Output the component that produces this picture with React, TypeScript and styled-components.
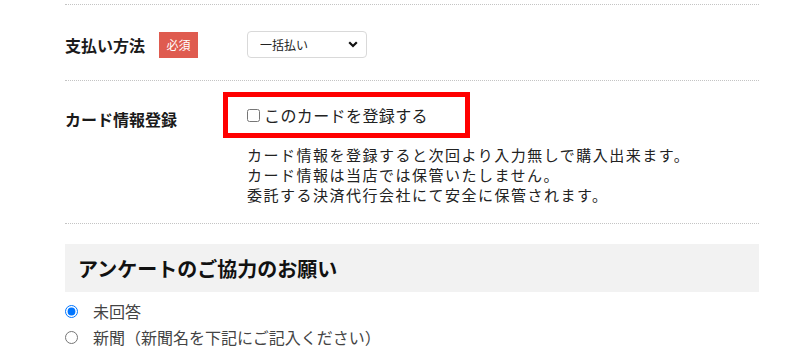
import styled, { createGlobalStyle } from 'styled-components'

const GlobalStyle = createGlobalStyle`
  body {
    margin: 0;
    background: #fff;
    font-family: "Noto Sans CJK JP", "Noto Sans", sans-serif;
    color: #222;
  }
`

export default function App() {
  return (
    <Page>
      <GlobalStyle />
      <Form>
        <Row $pad="26px 0 22px">
          <Label>
            支払い方法
            <Required>必須</Required>
          </Label>
          <Value>
            <SelectWrap>
              <Select defaultValue="1">
                <option value="1">一括払い</option>
              </Select>
              <Chevron width="10" height="7" viewBox="0 0 10 7">
                <path d="M1.2 1.2 L5 5 L8.8 1.2" fill="none" stroke="#111" strokeWidth="2.2" />
              </Chevron>
            </SelectWrap>
          </Value>
        </Row>

        <Row $pad="11px 0 18px" $top>
          <Label $top>カード情報登録</Label>
          <Value>
            <Highlight>
              <Check>
                <input type="checkbox" />
                このカードを登録する
              </Check>
            </Highlight>
            <Note>
              <span>カード情報を登録すると次回より入力無しで購入出来ます。</span>
              <span>カード情報は当店では保管いたしません。</span>
              <span>委託する決済代行会社にて安全に保管されます。</span>
            </Note>
          </Value>
        </Row>

        <Heading>アンケートのご協力のお願い</Heading>
        <Radios>
          <Radio>
            <input type="radio" name="q" defaultChecked />
            未回答
          </Radio>
          <Radio>
            <input type="radio" name="q" />
            新聞（新聞名を下記にご記入ください）
          </Radio>
        </Radios>
      </Form>
    </Page>
  )
}

const Page = styled.div`
  padding: 4px 0 0 65px;
`

const Form = styled.div`
  width: 694px;
  border-top: 1px dotted #c4c4c4;
`

const Row = styled.div<{ $pad: string; $top?: boolean }>`
  display: grid;
  grid-template-columns: 182px 1fr;
  align-items: ${p => (p.$top ? 'start' : 'center')};
  padding: ${p => p.$pad};
  border-bottom: 1px dotted #c4c4c4;
`

const Label = styled.div<{ $top?: boolean }>`
  display: flex;
  align-items: center;
  gap: 14px;
  font-size: 16px;
  font-weight: bold;
  color: #1a1a1a;
  padding-top: ${p => (p.$top ? '15px' : '0')};
`

const Required = styled.span`
  display: inline-flex;
  align-items: center;
  justify-content: center;
  width: 39px;
  height: 26px;
  background: #df5b4f;
  color: #fff;
  font-size: 12px;
  font-weight: normal;
`

const Value = styled.div`
  display: flex;
  flex-direction: column;
  align-items: flex-start;
`

const SelectWrap = styled.div`
  position: relative;
  width: 120px;
  height: 27px;
`

const Select = styled.select`
  appearance: none;
  width: 100%;
  height: 100%;
  box-sizing: border-box;
  border: 1px solid #d9d9d9;
  border-radius: 4px;
  background: #fff;
  padding: 0 0 0 12px;
  font-family: inherit;
  font-size: 12px;
  color: #222;
`

const Chevron = styled.svg`
  position: absolute;
  right: 9px;
  top: 10px;
  pointer-events: none;
`

const Highlight = styled.div`
  margin-left: -24px;
  width: 247px;
  height: 46px;
  box-sizing: border-box;
  border: 5px solid #ff0000;
  display: flex;
  align-items: center;
  padding-left: 19px;
`

const Check = styled.label`
  display: flex;
  align-items: center;
  gap: 4px;
  font-size: 16px;
  letter-spacing: 0.4px;
  color: #222;

  input {
    margin: 0;
    width: 13px;
    height: 13px;
  }
`

const Note = styled.div`
  display: flex;
  flex-direction: column;
  margin-top: 7px;
  font-size: 15px;
  letter-spacing: 1.5px;
  color: #222;

  span {
    height: 20px;
    line-height: 20px;
  }
`

const Heading = styled.h2`
  margin: 20px 0 0;
  height: 48px;
  display: flex;
  align-items: center;
  padding: 0 13px;
  background: #f2f2f2;
  font-size: 20px;
  font-weight: bold;
  color: #111;
`

const Radios = styled.div`
  display: flex;
  flex-direction: column;
  gap: 4px;
  padding-top: 8px;
`

const Radio = styled.label`
  display: flex;
  align-items: center;
  gap: 15px;
  height: 22px;
  font-size: 16px;
  color: #444;

  input {
    margin: 0;
    width: 13px;
    height: 13px;
  }
`
